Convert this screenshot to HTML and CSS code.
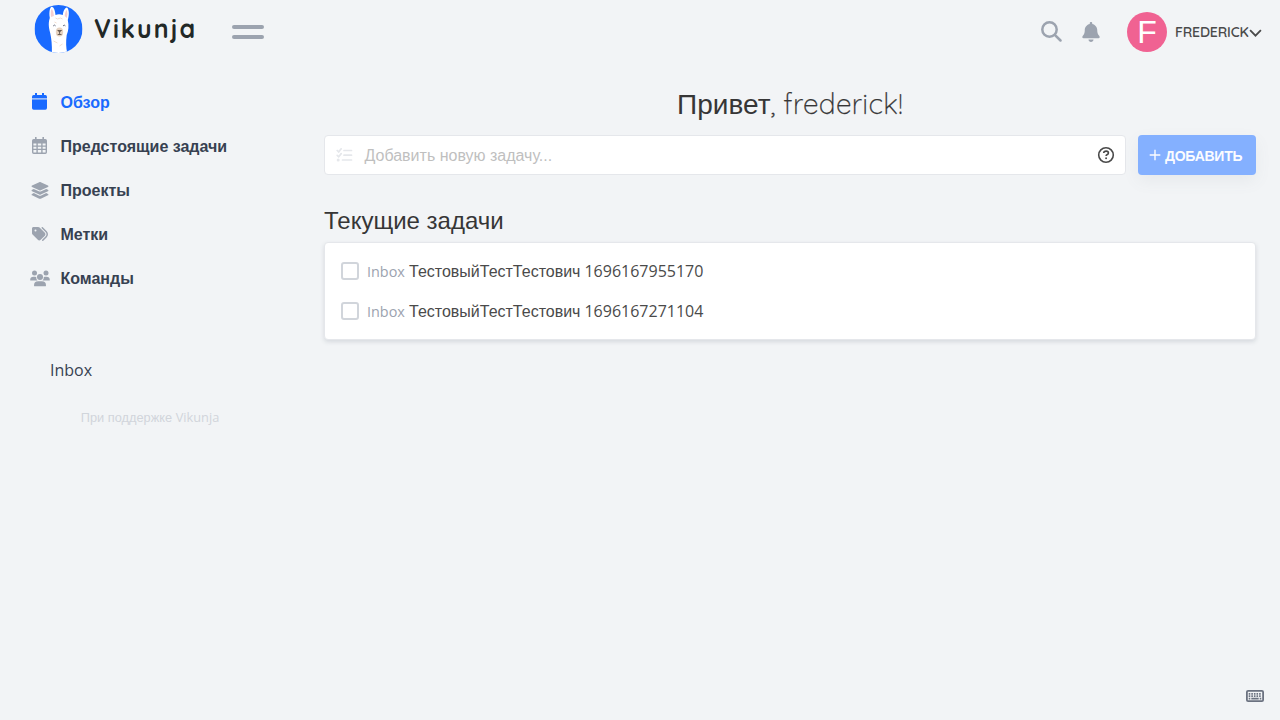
FILE: index.html
```html
<!DOCTYPE html>
<html lang="ru">
<head>
<meta charset="utf-8">
<title>Vikunja</title>
<link rel="stylesheet" href="styles.css">
</head>
<body>
<header class="navbar">
  <a class="brand">
    <svg class="brand-mark" viewBox="0 0 48 48">
      <clipPath id="disc"><circle cx="24" cy="24" r="24"/></clipPath>
      <g clip-path="url(#disc)">
        <rect width="48" height="48" fill="#196aff"/>
        <path d="M17.4 48C17.6 40 17 34 15.7 28C13.8 21 14 17 15.3 13C14.2 6 15.8 1.5 17.5 1.7C19.8 2.5 20.6 6 21 10Q24.5 8.6 28.3 10C28.9 5 31 2.2 32.6 2.5C34.8 5 34.8 10 33.3 15C34.6 21 34 26 32.2 30C31.3 37 31.5 43 32.8 48Z" fill="#fff"/>
        <path d="M16.5 12C16 7 16.5 4 17.5 4Q19 6 19.4 11ZM30.2 11Q30.7 6 32.4 5Q33.5 8 32.3 13Z" fill="#f6cfd0"/>
        <ellipse cx="25" cy="27" rx="3.7" ry="4.5" fill="#e7d3c0"/>
        <path d="M23.200 25.500h3.800l-1.900 1.300zM25.100 26v3.300M23.200 29.500h3.800" fill="none" stroke="#53483f" stroke-width=".8"/>
        <path d="M18.700 21q1.200-1.800 2.400-.1M28.500 21q1.200-1.800 2.400-.1" fill="none" stroke="#596174" stroke-width=".9"/>
        <path d="M21 13l2 1 3-1 2 1M19 36l4 2M25 41l3-2M20 17l2 1" fill="none" stroke="#f2dfd0" stroke-width="1"/>
      </g>
    </svg>
    <span class="brand-name">Vikunja</span>
  </a>
  <div class="menu-button"><span></span><span></span></div>
  <div class="navbar-end">
    <svg class="search-icon" viewBox="0 0 21 21"><circle cx="8.500" cy="8.500" r="7.200"/><path d="M13.800 13.800l5.700 5.700"/></svg>
    <svg class="bell-icon" viewBox="0 0 448 512"><path d="M224 0c-17.7 0-32 14.3-32 32V51.2C119 66 64 130.6 64 208v18.8c0 47-17.3 92.4-48.5 127.6l-7.4 8.3c-8.4 9.4-10.4 22.9-5.3 34.4S19.400 416 32 416H416c12.600 0 24-7.400 29.200-18.900s3.100-25-5.300-34.400l-7.400-8.300C401.300 319.200 384 273.900 384 226.800V208c0-77.400-55-142-128-156.800V32c0-17.700-14.300-32-32-32zm45.300 493.300c12-12 18.700-28.300 18.700-45.300H160c0 17 6.700 33.300 18.700 45.300s28.300 18.700 45.300 18.700s33.300-6.700 45.300-18.700z"/></svg>
    <span class="avatar">F</span>
    <span class="username">FREDERICK</span>
    <svg class="chevron" viewBox="0 0 12 8"><path d="M.6 1.200L6 6.700l5.400-5.500"/></svg>
  </div>
</header>
<div class="layout">
  <aside class="sidebar">
    <nav class="menu">
      <a class="menu-item active">
        <svg class="menu-icon raised" viewBox="0 0 20 18"><path d="M5 0h2v4H5zM12 0h2v4h-2z"/><path d="M2 4q0-2 1.700-2h11.600Q17 2 17 4v1H2z"/><path d="M2 6.500h15V15q0 1.700-1.700 1.700H3.700Q2 16.700 2 15z"/><path d="M2 5h15v1.500H2z" opacity=".4"/></svg>
        <span>Обзор</span>
      </a>
      <a class="menu-item">
        <svg class="menu-icon raised" viewBox="0 0 20 18"><path d="M5 0h1.600v2.500H5zM12.400 0H14v2.500h-1.600z"/><path fill-rule="evenodd" d="M3.700 2h11.600Q17 2 17 3.700v11.600q0 1.700-1.700 1.700H3.700Q2 17 2 15.300V3.700Q2 2 3.700 2zM3.400 6.500v2h3v-2zm4.400 0v2h3.400v-2zm4.800 0v2h3v-2zM3.400 9.700v2h3v-2zm4.400 0v2h3.400v-2zm4.800 0v2h3v-2zM3.400 13v2.600h3V13zm4.400 0v2.600h3.400V13zm4.800 0v2.600h3V13z"/></svg>
        <span>Предстоящие задачи</span>
      </a>
      <a class="menu-item">
        <svg class="menu-icon" viewBox="-16 0 608 547"><path d="M264.500 5.200c14.900-6.900 32.100-6.900 47 0l218.600 101c8.500 3.900 13.900 12.400 13.900 21.800s-5.400 17.900-13.900 21.800l-218.600 101c-14.900 6.900-32.100 6.900-47 0L45.900 149.800C37.400 145.800 32 137.300 32 128s5.400-17.900 13.900-21.800L264.500 5.200zM476.900 209.600l53.200 24.600c8.500 3.900 13.900 12.400 13.900 21.800s-5.400 17.900-13.900 21.800l-218.600 101c-14.900 6.900-32.100 6.900-47 0L45.900 277.800C37.400 273.800 32 265.300 32 256s5.400-17.900 13.900-21.800l53.200-24.600 152 70.200c23.400 10.800 50.400 10.800 73.800 0l152-70.200zm-152 198.200l152-70.200 53.200 24.600c8.500 3.900 13.900 12.400 13.900 21.800s-5.400 17.900-13.900 21.800l-218.600 101c-14.900 6.900-32.100 6.900-47 0L45.900 405.800C37.400 401.800 32 393.300 32 384s5.400-17.900 13.900-21.800l53.200-24.600 152 70.200c23.400 10.800 50.400 10.800 73.800 0z"/></svg>
        <span>Проекты</span>
      </a>
      <a class="menu-item">
        <svg class="menu-icon" viewBox="-64 0 640 576"><path d="M345 39.100L472.800 168.400c52.400 53 52.400 138.200 0 191.200L360.800 472.900c-9.300 9.400-24.500 9.500-33.900 .2s-9.500-24.500-.2-33.900L438.600 325.900c33.900-34.300 33.900-89.400 0-123.700L310.900 72.900c-9.300-9.400-9.200-24.600 .2-33.900s24.600-9.200 33.900 .2zM0 229.500V80C0 53.500 21.500 32 48 32H197.500c17 0 33.300 6.700 45.300 18.700l168 168c25 25 25 65.500 0 90.500L277.300 442.700c-25 25-65.500 25-90.500 0l-168-168C6.700 262.700 0 246.500 0 229.500zM144 144a32 32 0 1 0 -64 0 32 32 0 1 0 64 0z"/></svg>
        <span>Метки</span>
      </a>
      <a class="menu-item">
        <svg class="menu-icon" viewBox="0 0 20 18"><circle cx="4.500" cy="3" r="2.500"/><circle cx="16" cy="3" r="2.500"/><circle cx="10" cy="7" r="3"/><path d="M.7 10.500Q.2 10.500.2 10 .2 6.700 3.500 6.700h1.300q.7 0 1.400.3Q5.900 9.200 7.500 10.500zM12.500 10.500q1.600-1.300 1.300-3.500.7-.3 1.400-.3h1.200q3.400 0 3.400 3.300 0 .5-.5.500zM4.900 16.300q-.9 0-.9-.9 0-4.100 4.200-4.100h3.600q4.200 0 4.200 4.100 0 .9-.9.9z"/></svg>
        <span>Команды</span>
      </a>
    </nav>
    <a class="project">Inbox</a>
    <a class="powered">При поддержке <span class="powered-name">Vikunja</span></a>
  </aside>
  <main class="content">
    <h1 class="greeting">Привет<span class="greeting-name">, frederick!</span></h1>
    <div class="add-task">
      <div class="task-input">
        <svg class="list-icon" viewBox="0 0 16 14"><path d="M.7 2.500l1.500 1.400L4.700.8M.7 7.300l1.500 1.400 2.500-3.100M7.500 2.500H15M7.500 7.200H15M6 12h9" fill="none" stroke="currentColor" stroke-width="1.700" stroke-linecap="round"/><circle cx="1.700" cy="12" r="1.500" fill="currentColor"/></svg>
        <span class="placeholder">Добавить новую задачу...</span>
        <svg class="help-icon" viewBox="0 0 18 18"><circle cx="9" cy="9" r="7.300"/><path d="M6.700 7q.1-1.900 2.500-1.900 2.200 0 2.200 1.800 0 1.200-1.400 1.800-.9.400-.9 1.200"/><circle class="help-dot" cx="9.100" cy="12.300" r=".95"/></svg>
      </div>
      <button class="add-button"><svg class="plus-icon" viewBox="0 0 12 12"><path d="M6 .7v10.600M.7 6h10.600"/></svg><span>ДОБАВИТЬ</span></button>
    </div>
    <h2 class="section-title">Текущие задачи</h2>
    <div class="tasks">
      <div class="task"><span class="checkbox"></span><span class="task-project">Inbox</span><span class="task-title">ТестовыйТестТестович</span><span class="task-number">1696167955170</span></div>
      <div class="task"><span class="checkbox"></span><span class="task-project">Inbox</span><span class="task-title">ТестовыйТестТестович</span><span class="task-number">1696167271104</span></div>
    </div>
  </main>
</div>
<svg class="keyboard" viewBox="0 0 18 12"><rect x=".9" y=".9" width="16.200" height="10.200" rx="1.200"/><path d="M2.700 3.900h13M2.700 6.200h13" stroke-dasharray="1.600 1"/><path d="M2.700 8.700h1.600M5.300 8.700h7.400M13.700 8.700h1.600"/></svg>
</body>
</html>
```

FILE: styles.css
```css
* { box-sizing: border-box; }
body {
  margin: 0;
  height: 720px;
  overflow: hidden;
  background: #f2f4f6;
  color: #4a4a4a;
  font: 16px/24px "Liberation Sans", sans-serif;
}
svg { display: block; flex: none; }
.navbar { display: flex; height: 64px; padding-left: 34px; }
.brand { display: flex; width: 198px; }
.brand-mark { width: 49px; height: 48px; margin-top: 4.5px; }
.brand-name {
  margin: 12px 0 0 11px;
  color: #222827;
  font: 700 28px/32px Quicksand, Lato, sans-serif;
  letter-spacing: 2.3px;
  transform: scaleX(.89);
  transform-origin: left;
}
.menu-button { display: flex; flex-direction: column; gap: 6px; width: 32px; padding-top: 25px; }
.menu-button span { height: 4px; border-radius: 2px; background: #9ca3af; }
.navbar-end { display: flex; align-items: center; margin-left: auto; padding-right: 18px; color: #9ca3af; }
.search-icon { width: 21px; height: 21px; margin-bottom: 1px; fill: none; stroke: currentColor; stroke-width: 2.5; stroke-linecap: round; }
.bell-icon { width: 18px; height: 20px; margin: 0 0 1px 20px; fill: currentColor; }
.avatar {
  width: 40px;
  height: 40px;
  margin-left: 27px;
  border-radius: 50%;
  background: #f06292;
  color: #fff;
  font: 400 32px/41px "Liberation Sans", sans-serif;
  text-align: center;
}
.username {
  width: 73px;
  margin-left: 8px;
  color: #4a4a4a;
  font: 600 14px/20px Quicksand, "Open Sans", sans-serif;
  letter-spacing: -.15px;
  white-space: nowrap;
}
.chevron { width: 13px; height: 8px; margin: 2px 0 0 1px; fill: none; stroke: #4a4a4a; stroke-width: 1.8; }
.layout { display: flex; }
.sidebar { width: 300px; padding-top: 16px; }
.menu-item { display: flex; align-items: center; gap: 10.5px; height: 44px; padding: 1px 0 0 30px; color: #374151; font-weight: 700; }
.menu-item span { padding-top: 1px; }
.menu-icon { width: 20px; height: 18px; fill: #9ca3af; }
.raised { margin-bottom: 1px; }
.active { color: #196aff; }
.active .menu-icon { fill: #196aff; }
.project { display: block; margin: 58px 0 0 50px; color: #374151; font-family: "Open Sans", sans-serif; }
.powered { display: block; margin-top: 26px; color: #d1d5db; font-size: 12.8px; line-height: 18px; text-align: center; }
.powered-name { font-family: "Open Sans", sans-serif; }
.content { width: 932px; margin-left: 24px; padding-top: 23px; }
.greeting { margin: 0; color: #363636; font-weight: 400; font-size: 28px; line-height: 34px; text-align: center; }
.greeting-name { font-family: Quicksand, Lato, sans-serif; font-weight: 300; letter-spacing: .3px; -webkit-text-stroke: .25px #363636; }
.add-task { display: flex; gap: 12px; margin-top: 13.4px; }
.task-input { display: flex; align-items: center; width: 802px; height: 40px; padding: 0 10px 0 11px; border: 1px solid #e5e7eb; border-radius: 4px; background: #fff; }
.list-icon { width: 17px; height: 14px; color: #e5e7eb; }
.placeholder { padding-top: 1.5px; margin-left: 11.5px; color: #bfbfbf; }
.help-icon { width: 18px; height: 18px; margin-left: auto; fill: none; stroke: #4a4a4a; stroke-width: 1.6; }
.help-dot { fill: #4a4a4a; stroke: none; }
.add-button { display: flex; align-items: center; gap: 4px; width: 118px; height: 40px; padding: 1px 0 0 11px; border: 0; border-radius: 4px; background: #84b0ff; box-shadow: 0 6px 16px rgba(107, 114, 128, .08); color: #fbfcff; font: 700 14px/20px "Liberation Sans", sans-serif; letter-spacing: -.25px; }
.plus-icon { width: 12px; height: 12px; margin-bottom: 1px; stroke: currentColor; stroke-width: 1.4; }
.section-title { margin: 30.6px 0 6px; color: #363636; font-weight: 400; font-size: 24px; line-height: 30px; }
.tasks { height: 98px; padding: 8px 16px; border: 1px solid #e5e7eb; border-radius: 4px; background: #fff; box-shadow: 0 2px 4px rgba(107, 114, 128, .2); }
.task { display: flex; align-items: baseline; height: 40px; padding-top: 8px; }
.checkbox { align-self: flex-start; width: 18px; height: 18px; margin-top: 3px; border: 2px solid #d1d5db; border-radius: 3px; }
.task-project { width: 38px; margin-left: 8px; color: #9ca3af; font: 14.4px/24px "Open Sans", sans-serif; }
.task-title { margin-left: 4px; }
.task-number { margin-left: 4px; font-family: "Open Sans", sans-serif; }
.keyboard { position: absolute; right: 16px; bottom: 18px; width: 18px; height: 12px; fill: none; stroke: #6b7280; stroke-width: 1.8; }
```
